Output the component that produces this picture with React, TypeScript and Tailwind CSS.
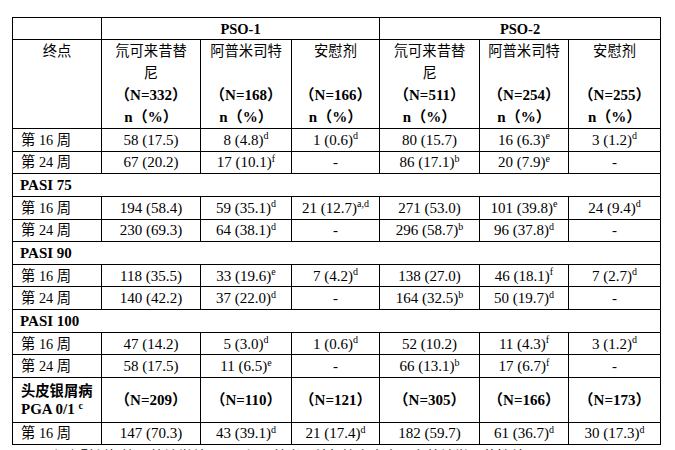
import React from "react";

type Cell = { v: string; s?: string };

const c = (v: string, s?: string): Cell => ({ v, s });

const groups: { title?: string; rows: { label: string; cells: Cell[] }[] }[] = [
  {
    rows: [
      { label: "16", cells: [c("58 (17.5)"), c("8 (4.8)", "d"), c("1 (0.6)", "d"), c("80 (15.7)"), c("16 (6.3)", "e"), c("3 (1.2)", "d")] },
      { label: "24", cells: [c("67 (20.2)"), c("17 (10.1)", "f"), c("-"), c("86 (17.1)", "b"), c("20 (7.9)", "e"), c("-")] },
    ],
  },
  {
    title: "PASI 75",
    rows: [
      { label: "16", cells: [c("194 (58.4)"), c("59 (35.1)", "d"), c("21 (12.7)", "a,d"), c("271 (53.0)"), c("101 (39.8)", "e"), c("24 (9.4)", "d")] },
      { label: "24", cells: [c("230 (69.3)"), c("64 (38.1)", "d"), c("-"), c("296 (58.7)", "b"), c("96 (37.8)", "d"), c("-")] },
    ],
  },
  {
    title: "PASI 90",
    rows: [
      { label: "16", cells: [c("118 (35.5)"), c("33 (19.6)", "e"), c("7 (4.2)", "d"), c("138 (27.0)"), c("46 (18.1)", "f"), c("7 (2.7)", "d")] },
      { label: "24", cells: [c("140 (42.2)"), c("37 (22.0)", "d"), c("-"), c("164 (32.5)", "b"), c("50 (19.7)", "d"), c("-")] },
    ],
  },
  {
    title: "PASI 100",
    rows: [
      { label: "16", cells: [c("47 (14.2)"), c("5 (3.0)", "d"), c("1 (0.6)", "d"), c("52 (10.2)"), c("11 (4.3)", "f"), c("3 (1.2)", "d")] },
      { label: "24", cells: [c("58 (17.5)"), c("11 (6.5)", "e"), c("-"), c("66 (13.1)", "b"), c("17 (6.7)", "f"), c("-")] },
    ],
  },
];

const arms = [
  { name: ["氘可来昔替", "尼"], n: "332" },
  { name: ["阿普米司特", ""], n: "168" },
  { name: ["安慰剂", ""], n: "166" },
  { name: ["氘可来昔替", "尼"], n: "511" },
  { name: ["阿普米司特", ""], n: "254" },
  { name: ["安慰剂", ""], n: "255" },
];

const td = "border border-black p-0 text-center align-middle leading-[18px]";
const cjk = "text-[14.3px]";

const Val = ({ cell }: { cell: Cell }) => (
  <>
    {cell.v}
    {cell.s && <sup className="text-[10px] relative top-[-0.55em]">{cell.s}</sup>}
  </>
);

const Week = ({ n }: { n: string }) => (
  <span className={cjk}>第 {n} 周</span>
);

export default function App() {
  return (
    <div
      className="w-[675px] h-[450px] overflow-hidden bg-white text-black pl-[12px] pt-[17px] text-[15px]"
      style={{ fontFamily: "'Liberation Serif', 'Noto Sans CJK SC', serif" }}
    >
      <table className="border-collapse table-fixed w-[648px]">
        <colgroup>
          <col className="w-[89px]" />
          <col className="w-[99px]" />
          <col className="w-[91px]" />
          <col className="w-[88px]" />
          <col className="w-[100px]" />
          <col className="w-[89px]" />
          <col className="w-[92px]" />
        </colgroup>
        <tbody>
          <tr className="h-[22px]">
            <td className={td}></td>
            <td className={`${td} font-bold text-[14.5px]`} colSpan={3}>PSO-1</td>
            <td className={`${td} font-bold text-[14.5px]`} colSpan={3}>PSO-2</td>
          </tr>
          <tr className="h-[88px]">
            <td className={`${td} !align-top pt-[2px] ${cjk}`}>终点</td>
            {arms.map((a, i) => (
              <td key={i} className={`${td} !align-top`}>
                <div className={`h-[22px] leading-[22px] ${cjk}`}>{a.name[0]}</div>
                <div className={`h-[22px] leading-[22px] ${cjk}`}>{a.name[1]}</div>
                <div className="h-[22px] leading-[22px] font-bold">（N={a.n}）</div>
                <div className="h-[22px] leading-[22px] font-bold">n（%）</div>
              </td>
            ))}
          </tr>
          {groups.map((g, gi) => (
            <React.Fragment key={gi}>
              {g.title && (
                <tr className="h-[22.65px]">
                  <td className={`${td} text-left pl-[7px] font-bold`} colSpan={7}>{g.title}</td>
                </tr>
              )}
              {g.rows.map((r, ri) => (
                <tr key={ri} className="h-[22.65px]">
                  <td className={`${td} text-left pl-[8px]`}>
                    <Week n={r.label} />
                  </td>
                  {r.cells.map((cell, ci) => (
                    <td key={ci} className={td}>
                      <Val cell={cell} />
                    </td>
                  ))}
                </tr>
              ))}
            </React.Fragment>
          ))}
          <tr className="h-[45px]">
            <td className={`${td} text-left pl-[8px] font-bold`}>
              <div className={cjk}>头皮银屑病</div>
              <div>
                PGA 0/1 <sup className="text-[10px] relative top-[-0.5em]">c</sup>
              </div>
            </td>
            {["209", "110", "121", "305", "166", "173"].map((n) => (
              <td key={n} className={`${td} font-bold`}>（N={n}）</td>
            ))}
          </tr>
          <tr className="h-[21.6px]">
            <td className={`${td} text-left pl-[8px]`}>
              <Week n="16" />
            </td>
            {[c("147 (70.3)"), c("43 (39.1)", "d"), c("21 (17.4)", "d"), c("182 (59.7)"), c("61 (36.7)", "d"), c("30 (17.3)", "d")].map((cell, ci) => (
              <td key={ci} className={td}>
                <Val cell={cell} />
              </td>
            ))}
          </tr>
        </tbody>
      </table>
      <p className="pl-[36px] pt-[2px] text-[14px] leading-[20px] whitespace-nowrap">
        <sup className="text-[9px] relative top-[-0.5em]">a</sup>与安慰剂相比无统计学差异；b 与阿普米司特相比名义上具有统计学显著性差异。
      </p>
    </div>
  );
}
